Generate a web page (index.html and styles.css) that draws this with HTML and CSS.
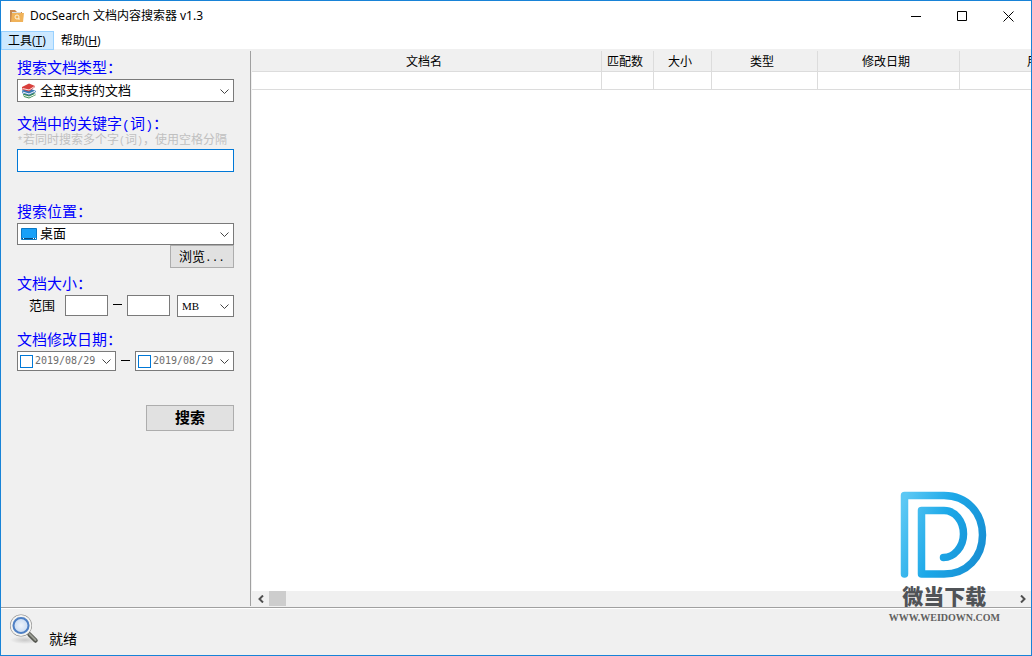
FILE: index.html
```html
<!DOCTYPE html>
<html lang="zh-CN">
<head>
<meta charset="utf-8">
<meta name="viewport" content="width=device-width, initial-scale=1">
<title>DocSearch 文档内容搜索器 v1.3</title>
<link rel="stylesheet" href="styles.css">
</head>
<body>
<div class="window">
  <header class="titlebar">
    <svg class="app-icon" width="16" height="14" viewBox="0 0 16 14" aria-hidden="true">
      <path d="M1 1h5l2 2h5v10H1z" fill="#c98a50"/>
      <path d="M3 3h9v5H3z" fill="#d9dde2"/>
      <path d="M3 4h12l-1 9H2z" fill="#f0b259"/>
      <circle cx="8" cy="8" r="2" fill="none" stroke="#fff3dc"/>
      <path d="M9 10h2" stroke="#fff3dc"/>
    </svg>
    <h1 class="title">DocSearch 文档内容搜索器 v1.3</h1>
    <div class="window-buttons">
      <button class="window-button" type="button" aria-label="最小化"><svg width="11" height="11" viewBox="0 0 11 11"><path d="M0 5.5h10" stroke="#000"/></svg></button>
      <button class="window-button" type="button" aria-label="最大化"><svg width="11" height="11" viewBox="0 0 11 11"><path d="M.5.5h9v9h-9z" fill="none" stroke="#000"/></svg></button>
      <button class="window-button" type="button" aria-label="关闭"><svg width="11" height="11" viewBox="0 0 11 11"><path d="M.5.5l10 10M10.500.5l-10 10" stroke="#000" fill="none"/></svg></button>
    </div>
  </header>

  <nav class="menubar">
    <button class="menu active" type="button">工具(<u>T</u>)</button>
    <button class="menu" type="button">帮助(<u>H</u>)</button>
  </nav>

  <main class="content">
    <form class="sidebar">
      <div class="group">
        <label class="caption" for="doc-type">搜索文档类型：</label>
        <div class="combo">
          <svg class="combo-icon" width="16" height="16" viewBox="0 0 16 16" aria-hidden="true">
            <path d="M2 11l8-2 5 2v1l-7 3.500-5-1.500z" fill="#3c8f52"/><path d="M3 12.500l5 1.500 7-3" fill="none" stroke="#f5f5f5"/>
            <path d="M1 7.500l8-2 6 2.500v1l-7 3.500L1 10z" fill="#3a78b8"/><path d="M1.500 9l6.500 2 6.500-3" fill="none" stroke="#f5f5f5"/>
            <path d="M1 4l7-3.500 6 2.500v1L8 8.500 1 6.500z" fill="#d9403c"/><path d="M1.500 5.500L8 7l5.500-3.500" fill="none" stroke="#f5e5e5"/>
          </svg>
          <select class="select with-icon" id="doc-type"><option>全部支持的文档</option></select>
          <svg class="chevron" width="9" height="5" viewBox="0 0 9 5" aria-hidden="true"><path d="M.5.5l4 4 4-4"/></svg>
        </div>
      </div>

      <div class="group keyword">
        <label class="caption" for="keyword">文档中的关键字<span class="half">(</span>词<span class="half">)</span>：</label>
        <p class="hint"><span class="half">*</span>若同时搜索多个字<span class="half">(</span>词<span class="half">)</span>，使用空格分隔</p>
        <input class="field focused" id="keyword" type="text">
      </div>

      <div class="group location">
        <label class="caption" for="location">搜索位置：</label>
        <div class="combo">
          <svg class="combo-icon" width="16" height="12" viewBox="0 0 16 12" aria-hidden="true">
            <path d="M.5.5h15v11H.5z" fill="#18a0f8" stroke="#0b78c4"/><path d="M1 10.500h14" stroke="#0a4a7c"/><path d="M2 10.500h1m9 0h1m1 0h1" stroke="#fff"/>
          </svg>
          <select class="select with-icon" id="location"><option>桌面</option></select>
          <svg class="chevron" width="9" height="5" viewBox="0 0 9 5" aria-hidden="true"><path d="M.5.5l4 4 4-4"/></svg>
        </div>
        <button class="button browse" type="button">浏览<span class="half">...</span></button>
      </div>

      <div class="group size">
        <span class="caption">文档大小：</span>
        <div class="row">
          <label class="range" for="size-min">范围</label>
          <input class="field number" id="size-min" type="text">
          <span class="dash"></span>
          <input class="field number" type="text" aria-label="最大">
          <div class="combo unit">
            <select class="select serif" aria-label="单位"><option>MB</option></select>
            <svg class="chevron" width="9" height="5" viewBox="0 0 9 5" aria-hidden="true"><path d="M.5.5l4 4 4-4"/></svg>
          </div>
        </div>
      </div>

      <div class="group dates">
        <span class="caption">文档修改日期：</span>
        <div class="row">
          <div class="date">
            <input class="check" type="checkbox" aria-label="启用开始日期">
            <input class="date-text" type="text" value="2019/08/29" aria-label="开始日期">
            <svg class="arrow" width="9" height="5" viewBox="0 0 9 5" aria-hidden="true"><path d="M.5.5l4 4 4-4"/></svg>
          </div>
          <span class="dash"></span>
          <div class="date">
            <input class="check" type="checkbox" aria-label="启用结束日期">
            <input class="date-text" type="text" value="2019/08/29" aria-label="结束日期">
            <svg class="arrow" width="9" height="5" viewBox="0 0 9 5" aria-hidden="true"><path d="M.5.5l4 4 4-4"/></svg>
          </div>
        </div>
      </div>

      <button class="button search" type="button">搜索</button>
    </form>

    <section class="results">
      <div class="table-area">
        <table class="table">
          <colgroup><col class="c-name"><col class="c-match"><col class="c-size"><col class="c-type"><col class="c-date"><col class="c-user"></colgroup>
          <thead><tr><th>文档名</th><th>匹配数</th><th>大小</th><th>类型</th><th>修改日期</th><th>用户</th></tr></thead>
          <tbody><tr><td></td><td></td><td></td><td></td><td></td><td></td></tr></tbody>
        </table>
      </div>
      <div class="scrollbar">
        <button class="scroll-button" type="button" aria-label="向左滚动"><svg width="6" height="8" viewBox="0 0 6 8"><path d="M5 .5L1.500 4 5 7.500"/></svg></button>
        <div class="thumb"></div>
        <button class="scroll-button end" type="button" aria-label="向右滚动"><svg width="6" height="8" viewBox="0 0 6 8"><path d="M1 .5L4.500 4 1 7.500"/></svg></button>
      </div>
    </section>
  </main>

  <footer class="statusbar">
    <svg class="magnifier" width="32" height="32" viewBox="0 0 32 32" aria-hidden="true">
      <defs>
        <radialGradient id="lens"><stop offset="0" stop-color="#eef4fc"/><stop offset="1" stop-color="#bcd2ee"/></radialGradient>
        <radialGradient id="shade"><stop offset="0" stop-color="#c8c8c8"/><stop offset="1" stop-color="#f0f0f0"/></radialGradient>
      </defs>
      <ellipse cx="16" cy="27" rx="15" ry="4" fill="url(#shade)"/>
      <path d="M18 19l3 3" stroke="#777" stroke-width="2"/>
      <path d="M20.500 21.500l6 6" stroke="#555750" stroke-width="4.500" stroke-linecap="round"/>
      <path d="M20.500 21l6 6" stroke="#9a9d94" stroke-width="2" stroke-linecap="round"/>
      <circle cx="12" cy="12.500" r="10" fill="url(#lens)" stroke="#888" stroke-width="2"/>
      <circle cx="12" cy="12.500" r="9.500" fill="none" stroke="#f4f4f2" stroke-width="2"/>
      <circle cx="12" cy="12.500" r="7.500" fill="none" stroke="#4f80c4" stroke-width="2"/>
    </svg>
    <span class="status">就绪</span>
  </footer>

  <div class="watermark">
    <svg width="88" height="88" viewBox="0 0 88 88" aria-hidden="true">
      <defs><linearGradient id="blue" gradientUnits="userSpaceOnUse" x1="0" y1="20" x2="86" y2="50"><stop offset="0" stop-color="#5cc8f4"/><stop offset=".5" stop-color="#1ca8e8"/><stop offset="1" stop-color="#1890d4"/></linearGradient></defs>
      <g fill="none" stroke="url(#blue)" stroke-width="7.500" stroke-linecap="round" stroke-linejoin="round">
        <path d="M4.500 83V4.500H44C67 4.500 82.500 22 82.500 44S67 83 44 83H21.500V19.500H44C55 19.500 63.500 30 63.500 43S54 66.500 43.500 66.500"/>
      </g>
    </svg>
    <strong class="brand">微当下载</strong>
    <span class="site">WWW.WEIDOWN.COM</span>
  </div>
</div>
</body>
</html>
```
FILE: styles.css
```css
* { box-sizing: border-box; }

body {
  margin: 0;
  color: #000;
  font: 12px/16px "Liberation Sans", "Noto Sans CJK SC", sans-serif;
}

button, input, select { font: inherit; color: inherit; margin: 0; border-radius: 0; }

.window {
  position: relative;
  display: grid;
  grid-template-rows: 30px 18px 1fr 48px;
  min-height: 100vh;
  border: 1px solid #1883d7;
  background: #f0f0f0;
}

.titlebar { display: flex; align-items: center; padding-left: 8px; background: #fff; }
.app-icon { margin-right: 5px; }
.title { margin: 0; font: 12px/16px "Noto Sans", "Noto Sans CJK SC", sans-serif; }
.window-buttons { display: flex; margin-left: auto; }
.window-button { display: grid; place-items: center; width: 46px; height: 28px; padding: 0; border: 0; background: none; }

.menubar { display: flex; background: #fff; }
.menu { height: 19px; padding: 1px 6px 0; border: 1px solid transparent; background: none; font: 12px/16px "Open Sans", "Noto Sans CJK SC", sans-serif; }
.menu.active { padding-right: 7px; border-color: #99d1ff; background: #cce8ff; }

.content { display: flex; min-width: 0; padding: 2px 0 1px; }

.sidebar { display: flex; flex-direction: column; flex: 0 0 250px; padding: 7px 16px 0; border-right: 1px solid #a0a0a0; }
.group { display: flex; flex-direction: column; }
.keyword { margin-top: 12px; }
.location { margin-top: 30px; }
.size { margin-top: 6px; }
.dates { margin-top: 13px; }
.caption { height: 20px; margin-bottom: 1px; color: #00f; font-size: 15px; line-height: 20px; white-space: nowrap; }
.keyword .caption { margin-bottom: 0; }
.hint { height: 12px; margin: 0 0 3px; color: #c0c0c0; line-height: 12px; white-space: nowrap; }
.half { display: inline-block; min-width: 6px; text-align: center; font-family: "Liberation Mono", monospace; font-size: 10px; line-height: 1; }
.caption .half { min-width: 8px; font-size: 13px; }

.field { width: 100%; height: 23px; padding: 0 4px; border: 1px solid #7a7a7a; background: #fff; outline: 0; }
.field.focused { border-color: #0078d7; }
.field.number { width: 43px; height: 21px; }

.combo { position: relative; }
.select { display: block; width: 100%; height: 22px; padding: 0 16px 0 4px; border: 1px solid #7a7a7a; background: #fff; appearance: none; font-size: 13px; line-height: 20px; }
.select.with-icon { padding-left: 22px; }
.group:first-child .select { height: 23px; }
.select.serif { font-family: "Liberation Serif", serif; font-size: 11px; }
.combo-icon { position: absolute; left: 4px; top: 0; bottom: 0; margin: auto 0; }
.chevron { position: absolute; right: 5px; top: 1px; bottom: 0; margin: auto 0; }
.chevron path, .arrow path { fill: none; stroke: #444; }

.button { border: 1px solid #adadad; background: #e1e1e1; padding: 0; }
.browse { align-self: flex-end; width: 64px; height: 23px; font-size: 13px; }
.browse .half { font-size: 11px; }
.search { align-self: flex-end; width: 88px; height: 26px; margin-top: 34px; font-size: 15px; font-weight: bold; }

.row { display: flex; justify-content: space-between; align-items: flex-start; }
.range { margin-right: 5px; padding-left: 12px; font-size: 13px; line-height: 21px; white-space: nowrap; }
.dash { width: 9px; height: 1px; margin-top: 9px; background: #000; }
.unit { width: 57px; margin-left: 2px; }
.size .row { gap: 5px; }

.date { display: flex; align-items: center; width: 99px; height: 20px; padding: 0 4px 0 2px; border: 1px solid #7a7a7a; background: #fff; }
.check { flex: none; width: 13px; height: 13px; border: 1px solid #0078d7; background: #fff; appearance: none; }
.date-text { flex: 1; min-width: 0; padding: 0 0 0 2px; border: 0; background: none; color: #6d6d6d; font: 10px/16px "DejaVu Sans Mono", monospace; }
.arrow { flex: none; }

.results { display: flex; flex: 1; flex-direction: column; min-width: 0; margin-left: 1px; background: #fff; }
.table-area { flex: 1; overflow: hidden; }
.table { width: 867px; border-collapse: separate; border-spacing: 0; table-layout: fixed; }
.c-name { width: 350px; }
.c-match { width: 52px; }
.c-size { width: 58px; }
.c-type { width: 106px; }
.c-date { width: 142px; }
.c-user { width: 159px; }
.table th { height: 21px; padding: 2px 5px 0 0; border: solid #dcdcdc; border-width: 0 1px 1px 0; background: #f0f0f0; font-weight: normal; line-height: 18px; white-space: nowrap; }
.table th:last-child { padding-right: 0; }
.table td { height: 18px; padding: 0; border: solid #dcdcdc; border-width: 0 1px 1px 0; }

.scrollbar { display: flex; height: 15px; background: #f0f0f0; }
.scroll-button { display: grid; place-items: center; width: 17px; height: 15px; padding: 0; border: 0; background: none; }
.scroll-button path { fill: none; stroke: #505050; stroke-width: 2; }
.scroll-button.end { margin-left: auto; }
.thumb { width: 17px; background: #cdcdcd; }

.statusbar { display: flex; align-items: flex-start; padding: 5px 8px 0; border-top: 1px solid #a0a0a0; box-shadow: inset 0 1px #fff; }
.status { margin: 16px 0 0 8px; font-size: 14px; line-height: 20px; }

.watermark { position: absolute; right: 31px; bottom: 31px; display: flex; flex-direction: column; align-items: center; pointer-events: none; }
.brand { margin-top: 6px; color: #505357; font: 900 21px/20px "Noto Sans CJK SC", sans-serif; }
.site { margin-top: 7px; color: #606060; font: bold 10px/12px "Liberation Serif", serif; }
```
